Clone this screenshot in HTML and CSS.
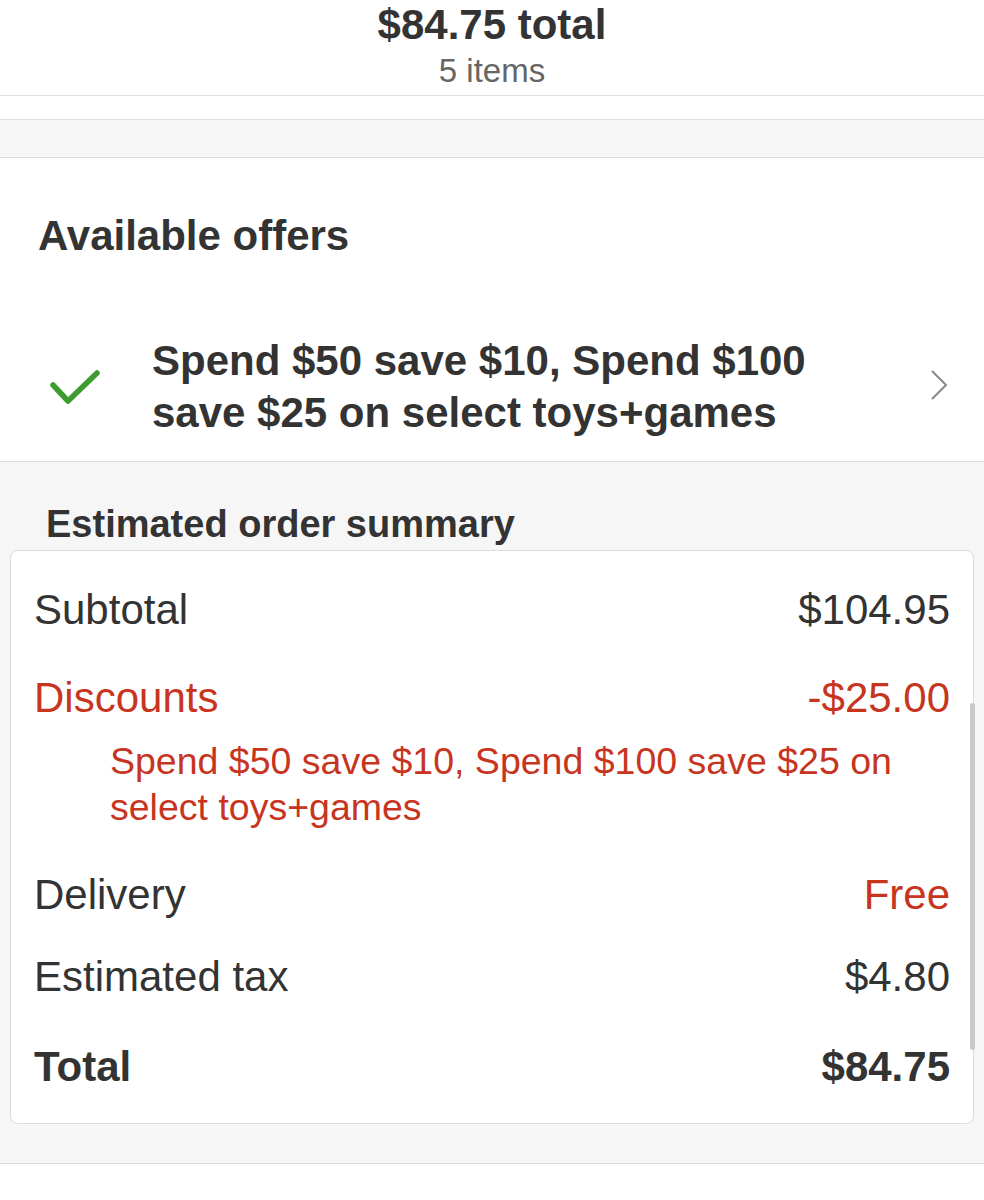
FILE: index.html
```html
<!DOCTYPE html>
<html>
<head>
<meta charset="utf-8">
<link rel="stylesheet" href="styles.css">
</head>
<body>
<header class="header">
  <div class="header-title">$84.75 total</div>
  <div class="header-sub">5 items</div>
</header>
<div class="spacer"></div>
<div class="band"></div>
<section class="offers">
  <h2 class="offers-title">Available offers</h2>
  <div class="offer">
    <svg class="check" width="50" height="36" viewBox="0 0 50 36"><polyline points="3,15 18,31 47,3" fill="none" stroke="#3e9b2f" stroke-width="5.5" stroke-linecap="round" stroke-linejoin="round"/></svg>
    <div class="offer-text">Spend $50 save $10, Spend $100 save $25 on select toys+games</div>
    <svg class="chev" width="16" height="30" viewBox="0 0 16 30"><polyline points="1.5,1.5 15,15 1.5,28.5" fill="none" stroke="#8a8a8a" stroke-width="2" stroke-linecap="round"/></svg>
  </div>
</section>
<section class="summary">
  <h3 class="summary-title">Estimated order summary</h3>
  <div class="card">
    <div class="row row-first"><span>Subtotal</span><span>$104.95</span></div>
    <div class="row row-red row-disc"><span>Discounts</span><span>-$25.00</span></div>
    <div class="disc-desc">Spend $50 save $10, Spend $100 save $25 on select toys+games</div>
    <div class="row row-deliv"><span>Delivery</span><span class="red">Free</span></div>
    <div class="row row-tax"><span>Estimated tax</span><span>$4.80</span></div>
    <div class="row row-total"><span>Total</span><span>$84.75</span></div>
    <div class="scrollbar"></div>
  </div>
</section>
<div class="bottom"></div>
</body>
</html>
```

FILE: styles.css
```css
html, body {
  margin: 0;
  padding: 0;
  background: #ffffff;
}
body {
  font-family: "Liberation Sans", Arial, Helvetica, sans-serif;
  color: #333333;
  width: 984px;
}
.header {
  text-align: center;
  padding-top: 2px;
  padding-bottom: 4px;
  border-bottom: 1px solid #dddddd;
}
.header-title {
  font-size: 42px;
  line-height: 46px;
  font-weight: bold;
}
.header-sub {
  margin-top: 3px;
  font-size: 33px;
  line-height: 40px;
  color: #666666;
}
.spacer {
  height: 23px;
}
.band {
  height: 37px;
  background: #f6f6f6;
  border-top: 1px solid #dddddd;
  border-bottom: 1px solid #dddddd;
}
.offers {
  padding: 55px 0 22px 0;
  border-bottom: 1px solid #dddddd;
}
.offers-title {
  margin: 0 0 76px 38px;
  font-size: 42px;
  line-height: 46px;
  font-weight: bold;
}
.offer {
  display: flex;
  align-items: center;
  padding: 0 37px 0 50px;
}
.check {
  flex: none;
  margin-top: 1px;
}
.offer-text {
  flex: 1;
  margin: 0 60px 0 52px;
  font-size: 42px;
  line-height: 52px;
  font-weight: bold;
}
.chev {
  flex: none;
  margin-top: -4px;
}
.summary {
  background: #f6f6f6;
  padding: 40px 0 39px 0;
  border-bottom: 1px solid #dddddd;
}
.summary-title {
  margin: 0 0 4px 46px;
  font-size: 38px;
  line-height: 44px;
  font-weight: bold;
}
.card {
  position: relative;
  margin: 0 10px;
  background: #ffffff;
  border: 1px solid #dcdcdc;
  border-radius: 8px;
  padding: 36px 23px 33px 23px;
}
.row {
  display: flex;
  justify-content: space-between;
  font-size: 42px;
  line-height: 46px;
}
.row-red, .red {
  color: #c8351f;
}
.row-disc {
  margin-top: 42px;
}
.disc-desc {
  margin: 17px 0 0 76px;
  font-size: 37.5px;
  line-height: 46px;
  color: #c8351f;
}
.row-deliv {
  margin-top: 42px;
}
.row-tax {
  margin-top: 36px;
}
.row-total {
  margin-top: 44px;
  font-weight: bold;
}
.scrollbar {
  position: absolute;
  right: -2px;
  top: 152px;
  width: 5px;
  height: 347px;
  border-radius: 3px;
  background: #c9c9c9;
}
.bottom {
  height: 40px;
}
```
